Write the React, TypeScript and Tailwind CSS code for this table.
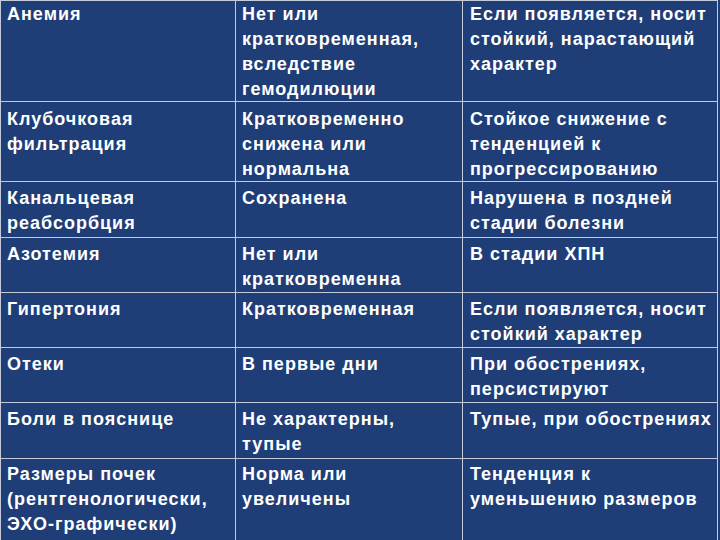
import React from 'react';

type Row = {
  height: string;
  pad: string;
  cells: string[][];
};

const rows: Row[] = [
  {
    height: 'h-[101px]',
    pad: 'pt-[1px]',
    cells: [
      ['Анемия'],
      ['Нет или', 'кратковременная,', 'вследствие', 'гемодилюции'],
      ['Если появляется, носит', 'стойкий, нарастающий', 'характер'],
    ],
  },
  {
    height: 'h-[80px]',
    pad: 'pt-[5px]',
    cells: [
      ['Клубочковая', 'фильтрация'],
      ['Кратковременно', 'снижена или', 'нормальна'],
      ['Стойкое снижение с', 'тенденцией к', 'прогрессированию'],
    ],
  },
  {
    height: 'h-[56px]',
    pad: 'pt-[4px]',
    cells: [
      ['Канальцевая', 'реабсорбция'],
      ['Сохранена'],
      ['Нарушена в поздней', 'стадии болезни'],
    ],
  },
  {
    height: 'h-[55px]',
    pad: 'pt-[4px]',
    cells: [['Азотемия'], ['Нет или', 'кратковременна'], ['В стадии ХПН']],
  },
  {
    height: 'h-[55px]',
    pad: 'pt-[4px]',
    cells: [
      ['Гипертония'],
      ['Кратковременная'],
      ['Если появляется, носит', 'стойкий характер'],
    ],
  },
  {
    height: 'h-[55px]',
    pad: 'pt-[4px]',
    cells: [['Отеки'], ['В первые дни'], ['При обострениях,', 'персистируют']],
  },
  {
    height: 'h-[56px]',
    pad: 'pt-[4px]',
    cells: [
      ['Боли в пояснице'],
      ['Не характерны,', 'тупые'],
      ['Тупые, при обострениях'],
    ],
  },
  {
    height: 'h-[90px]',
    pad: 'pt-[3px]',
    cells: [
      ['Размеры почек', '(рентгенологически,', 'ЭХО-графически)'],
      ['Норма или', 'увеличены'],
      ['Тенденция к', 'уменьшению размеров'],
    ],
  },
];

const colWidths = ['w-[235px]', 'w-[227px]', 'w-[255px]'];
const colPads = ['pl-[6px]', 'pl-[6px]', 'pl-[7px]'];

export default function App() {
  return (
    <div className="w-[720px] h-[540px] overflow-hidden bg-[#1f3e77]">
      <div
        className="w-[718px] border-l border-t border-[#c3cbdb] text-[18px] leading-[25px] tracking-[1px] font-bold text-white"
        style={{ fontFamily: '"Liberation Sans", Arial, sans-serif' }}
      >
        {rows.map((row, i) => (
          <div key={i} className={`flex border-b border-[#c3cbdb] ${row.height}`}>
            {row.cells.map((lines, j) => (
              <div
                key={j}
                className={`${colWidths[j]} ${colPads[j]} ${row.pad} shrink-0 border-r border-[#c3cbdb]`}
              >
                {lines.map((line, k) => (
                  <div key={k} className="whitespace-nowrap">
                    {line}
                  </div>
                ))}
              </div>
            ))}
          </div>
        ))}
      </div>
    </div>
  );
}
